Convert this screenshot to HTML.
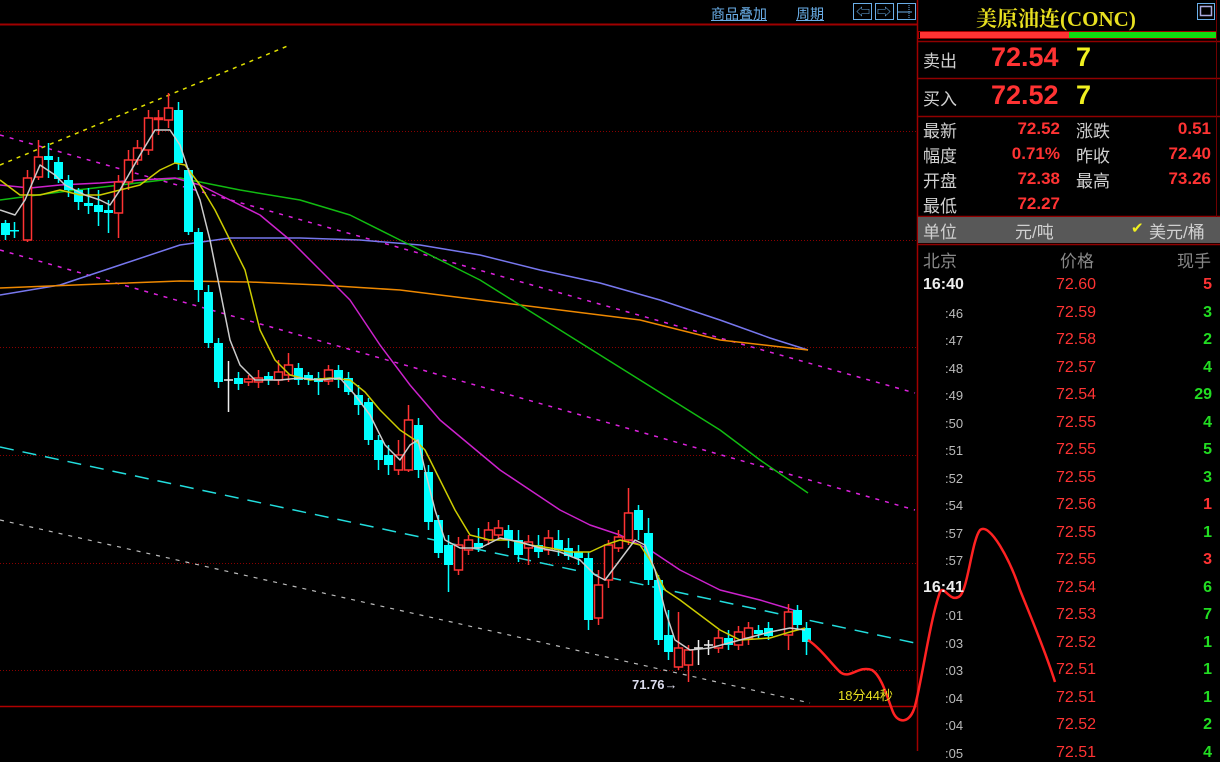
<!DOCTYPE html>
<html><head><meta charset="utf-8"><style>
body{margin:0;width:1220px;height:751px;background:#000;overflow:hidden;position:relative;font-family:"Liberation Sans","Noto Sans CJK SC",sans-serif;}
.a{position:absolute;white-space:nowrap;}
.lb{color:#d0d0d0;font-size:17px;}
.r{color:#ff3333;}
.g{color:#22dd22;}
.rv{position:absolute;text-align:right;white-space:nowrap;}
</style></head><body>
<svg id="c" width="1220" height="751" style="position:absolute;left:0;top:0"></svg>
<div class="a" style="left:711px;top:4px;color:#6aaee8;font-size:14px;text-decoration:underline">商品叠加</div>
<div class="a" style="left:796px;top:4px;color:#6aaee8;font-size:14px;text-decoration:underline">周期</div>
<div class="a" style="left:976px;top:3px;color:#e8e020;font-size:21px;font-family:'Liberation Serif','Noto Serif CJK SC',serif;font-weight:bold">美原油连(CONC)</div>
<div class="a lb" style="left:923px;top:47px">卖出</div>
<div class="a r" style="left:991px;top:42px;font-size:27px;font-weight:bold">72.54</div>
<div class="a" style="left:1076px;top:42px;font-size:27px;font-weight:bold;color:#f0f020">7</div>
<div class="a lb" style="left:923px;top:85px">买入</div>
<div class="a r" style="left:991px;top:80px;font-size:27px;font-weight:bold">72.52</div>
<div class="a" style="left:1076px;top:80px;font-size:27px;font-weight:bold;color:#f0f020">7</div>
<div id="st"></div>
<div class="a" style="left:918px;top:217px;width:302px;height:26px;background:#585858"></div>
<div class="a lb" style="left:923px;top:218px">单位</div>
<div class="a lb" style="left:1015px;top:218px">元/吨</div>
<div class="a" style="left:1131px;top:219px;color:#f0f020;font-size:15px">✔</div>
<div class="a lb" style="left:1149px;top:218px">美元/桶</div>
<div class="a" style="left:923px;top:247px;color:#888;font-size:17px">北京</div>
<div class="a" style="left:1060px;top:247px;color:#888;font-size:17px">价格</div>
<div class="a" style="left:1177px;top:247px;color:#888;font-size:17px">现手</div>
<div id="lst"></div>
<div class="a" style="left:632px;top:677px;color:#dde;font-size:13px;font-weight:bold">71.76→</div>
<div class="a" style="left:838px;top:685px;color:#e8e020;font-size:13px">18分44秒</div>
<script>
var s='';
function L(x1,y1,x2,y2,c,w,d){s+='<line x1="'+x1+'" y1="'+y1+'" x2="'+x2+'" y2="'+y2+'" stroke="'+c+'" stroke-width="'+(w||1)+'"'+(d?' stroke-dasharray="'+d+'"':'')+'/>';}
function P(pts,c,w){s+='<polyline fill="none" stroke="'+c+'" stroke-width="'+(w||1.5)+'" stroke-linejoin="round" points="'+pts+'"/>';}
[131,240,347,455,563,670].forEach(function(y){L(0,y+.5,916,y+.5,'#8a0000',1,'1 2');});
L(0,24.5,917,24.5,'#a00000',2);L(0,706.5,917,706.5,'#b00000',1.5);
L(917.5,0,917.5,751,'#a00000',1.5);
L(0,165,290,45,'#e0e000',1.5,'4 5');
L(0,135,915,393,'#dd22dd',1.5,'4 6');
L(0,250,915,510,'#dd22dd',1.5,'4 6');
L(0,447,915,643,'#22dddd',1.5,'14 9');
L(0,520,810,703,'#bbbbbb',1.2,'4 6');
P("0,295 60,285 120,265 180,245 230,238 300,238 360,240 420,245 480,255 540,270 600,283 660,300 720,320 770,338 808,350",'#7777ee');
P("0,288 100,284 180,281 250,282 320,285 400,290 480,300 560,310 640,320 720,340 808,350",'#ee8800');
P("0,200 60,192 120,185 180,178 240,190 300,200 350,215 400,240 440,260 480,280 520,305 560,330 600,355 640,380 680,405 720,430 760,460 808,493",'#11bb11');
P("0,185 30,188 60,185 100,183 140,180 175,178 200,185 230,200 260,215 290,240 320,270 350,300 380,345 410,385 440,420 470,445 500,470 530,490 560,510 590,525 620,535 650,550 680,570 720,590 760,600 800,612",'#cc22cc');
var C=[[5,223,235,220,240],[14,230,231,222,238],[27,240,178,170,242],[38,177,157,140,180],[48,156,160,143,178],[58,162,179,157,183],[68,180,190,175,197],[78,190,202,188,210],[88,203,206,188,214],[98,205,212,190,226],[108,210,213,200,233],[118,213,182,175,238],[128,182,160,150,190],[137,160,148,140,165],[148,150,118,110,155],[158,119,118,110,135],[168,120,108,93,128],[178,110,163,102,170],[188,170,232,168,235],[198,232,290,228,302],[208,292,343,285,348],[218,343,382,338,388],[228,380,381,361,412,1],[238,378,384,372,390],[248,382,379,375,386],[258,382,378,370,388],[268,376,380,372,385],[278,380,372,360,385],[288,375,365,353,382],[298,368,380,363,385],[308,375,380,372,385],[318,378,382,372,395],[328,381,370,365,385],[338,370,380,365,388],[348,378,392,372,395],[358,395,405,385,415],[368,402,440,398,445],[378,440,460,435,470],[388,455,465,445,475],[398,470,455,440,475],[408,470,420,405,472],[418,425,470,418,478],[428,472,522,465,530],[438,520,553,515,558],[448,545,565,535,592],[458,570,545,537,575],[468,550,540,535,555],[478,543,548,528,552],[488,540,530,522,545],[498,535,528,520,540],[508,530,540,525,548],[518,540,555,530,562],[528,548,542,535,565],[538,545,552,535,558],[548,550,538,530,555],[558,540,550,530,556],[568,548,556,538,560],[578,552,558,545,565],[588,558,620,552,630],[598,618,585,570,625],[608,580,545,540,588],[618,548,537,530,552],[628,540,513,488,545],[638,510,530,505,540],[648,533,580,518,585],[658,580,640,575,645],[668,635,652,610,660],[678,667,648,612,670],[688,665,650,645,682],[698,648,649,640,665,1],[708,645,646,640,655,1],[718,648,638,630,653],[728,638,645,630,650],[738,645,632,626,650],[748,638,628,622,645],[758,630,634,625,638],[768,628,636,622,640],[788,635,612,604,650],[797,610,625,605,630],[806,628,642,622,655]];
C.forEach(function(k){var x=k[0],o=k[1],c=k[2],up=c<o,col=k[5]?'#eee':(up?'#ff3333':'#00ffff');
L(x+.5,k[3],x+.5,k[4],col,1.5);var t=Math.min(o,c),h=Math.max(Math.abs(o-c),1.5);
if(k[5])L(x-4,o,x+5,o,col,1.5);
else if(up)s+='<rect x="'+(x-3.5)+'" y="'+t+'" width="8" height="'+h+'" fill="#000" stroke="'+col+'" stroke-width="1.5"/>';
else s+='<rect x="'+(x-4)+'" y="'+t+'" width="9" height="'+h+'" fill="'+col+'"/>';});
P("0,180 20,195 40,195 60,190 80,195 100,195 120,190 140,185 160,170 175,163 185,165 200,185 215,210 230,240 245,270 260,330 275,360 290,375 310,380 330,378 350,380 365,392 380,410 400,430 415,440 425,450 440,480 455,510 470,535 490,540 510,540 530,545 550,548 570,552 590,552 605,545 620,540 640,545 650,560 665,590 680,600 700,615 720,630 740,640 770,638 790,632 805,628",'#cccc00');
P("0,210 15,215 25,200 40,165 55,175 65,185 85,195 100,200 110,205 120,190 140,155 155,130 170,130 180,145 190,175 200,200 210,240 220,290 230,340 240,365 255,380 280,380 300,378 320,380 340,378 355,395 370,415 385,445 400,460 410,445 418,440 425,470 435,510 445,540 460,548 480,548 500,538 520,542 540,548 560,552 580,560 595,575 605,580 620,560 635,540 645,545 655,570 665,610 675,640 690,650 710,648 740,640 770,632 790,628 805,630",'#cccccc');
[[853],[875],[897]].forEach(function(b){s+='<rect x="'+b[0]+'.5" y="3.5" width="18" height="16" fill="none" stroke="#6aaee8"/>';});
s+='<text x="856" y="17" fill="#6aaee8" font-size="14">⇦</text><text x="877" y="17" fill="#6aaee8" font-size="14">⇨</text>';
L(898,12,912,12,'#6aaee8');L(909,5,909,19,'#6aaee8',1,'1 1');
s+='<rect x="1197.5" y="3.5" width="17" height="16" fill="none" stroke="#6aaee8"/><rect x="1200.5" y="6.5" width="11" height="9" fill="none" stroke="#aad" stroke-width="1.5"/>';
s+='<rect x="920" y="32" width="149" height="6" fill="#ff3333"/><rect x="1069" y="32" width="147" height="6" fill="#11dd11"/>';
s+='<rect x="918.5" y="31.5" width="298" height="7" fill="none" stroke="#a00000"/>';
[41,78,116,216,244].forEach(function(y){L(918,y+.5,1220,y+.5,'#900000',1.5);});
L(1216.5,0,1216.5,240,'#700000');
s+='<path d="M808,640 C820,648 830,662 840,672 C850,680 858,665 872,670 C882,676 888,700 893,712 C898,724 910,724 915,706 C922,680 930,620 940,592 C944,584 950,604 960,596 C968,588 972,540 980,530 C990,522 1010,560 1020,590 C1030,615 1045,650 1055,682" fill="none" stroke="#ff2222" stroke-width="2.5" stroke-linejoin="round"/>';
document.getElementById('c').innerHTML=s;
var st=[['最新','72.52','涨跌','0.51'],['幅度','0.71%','昨收','72.40'],['开盘','72.38','最高','73.26'],['最低','72.27','','']],h='';
st.forEach(function(r,i){var y=118+i*25;h+='<div class="a lb" style="left:923px;top:'+(y-1)+'px">'+r[0]+'</div><div class="rv r" style="left:980px;width:80px;top:'+(y+1)+'px;font-size:17px;font-weight:bold">'+r[1]+'</div><div class="a lb" style="left:1076px;top:'+(y-1)+'px">'+r[2]+'</div><div class="rv r" style="left:1131px;width:80px;top:'+(y+1)+'px;font-size:17px;font-weight:bold">'+r[3]+'</div>';});
document.getElementById('st').innerHTML=h;
var T=['16:40',':46',':47',':48',':49',':50',':51',':52',':54',':57',':57','16:41',':01',':03',':03',':04',':04',':05'],
Pr=['72.60','72.59','72.58','72.57','72.54','72.55','72.55','72.55','72.56','72.55','72.55','72.54','72.53','72.52','72.51','72.51','72.52','72.51'],
V=['5','3','2','4','29','4','5','3','1','1','3','6','7','1','1','1','2','4'],VC='rgggggggrgrgggggggg';h='';
T.forEach(function(t,i){var y=276+i*27.5,big=t.length>3;
h+='<div class="a" style="left:'+(big?923:945)+'px;top:'+(big?y:y+2)+'px;color:'+(big?'#eee':'#bbb')+';font-size:'+(big?16:13)+'px;font-weight:'+(big?'bold':'normal')+'">'+t+'</div>';
h+='<div class="rv r" style="left:1016px;width:80px;top:'+y+'px;font-size:16px">'+Pr[i]+'</div>';
h+='<div class="rv '+VC[i]+'" style="left:1152px;width:60px;top:'+y+'px;font-size:16px;font-weight:bold">'+V[i]+'</div>';});
document.getElementById('lst').innerHTML=h;
</script>
</body></html>
